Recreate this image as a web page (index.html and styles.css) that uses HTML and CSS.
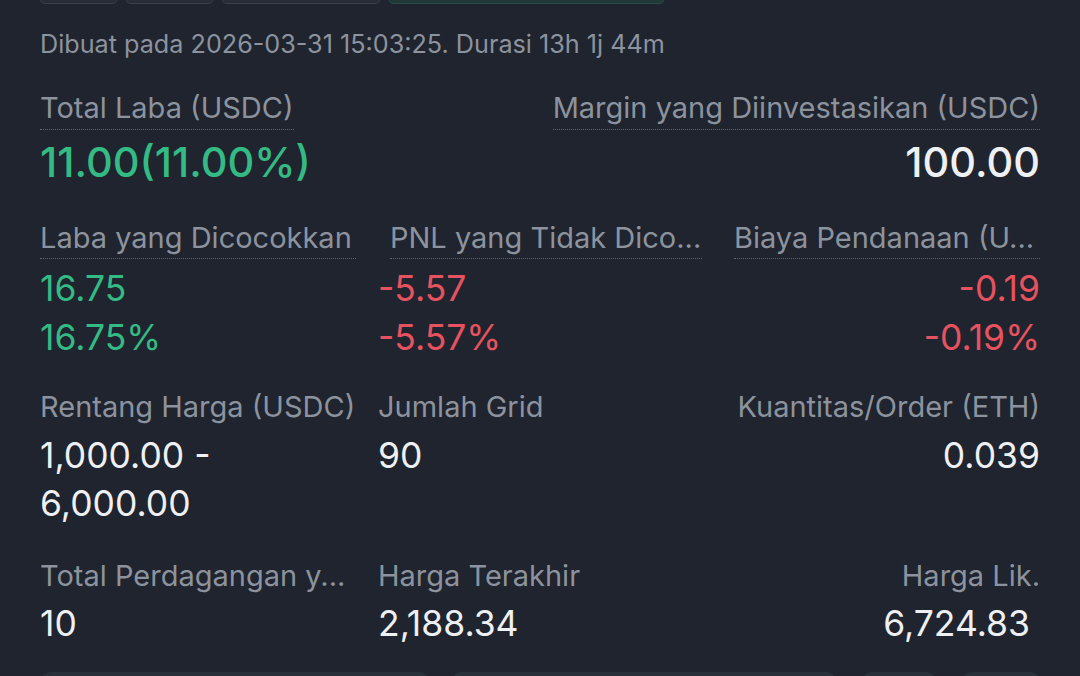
FILE: index.html
```html
<!DOCTYPE html>
<html lang="id">
<head>
<meta charset="utf-8">
<title>Grid Bot</title>
<link rel="stylesheet" href="styles.css">
</head>
<body>
<div class="page">
  <div class="chips">
    <div class="chip c1"></div>
    <div class="chip c2"></div>
    <div class="chip c3"></div>
    <div class="chip c4 green"></div>
  </div>

  <div class="date">Dibuat pada 2026-03-31 15:03:25. Durasi 13h 1j 44m</div>

  <div class="row row1">
    <div class="cell">
      <div class="label dotted">Total Laba (USDC)</div>
      <div class="big up">11.00(11.00%)</div>
    </div>
    <div class="cell right">
      <div class="label dotted">Margin yang Diinvestasikan (USDC)</div>
      <div class="big">100.00</div>
    </div>
  </div>

  <div class="row row2 grid3">
    <div class="cell">
      <div class="label dotted w1">Laba yang Dicocokkan</div>
      <div class="val up">16.75</div>
      <div class="val up">16.75%</div>
    </div>
    <div class="cell">
      <div class="label dotted w2 indent">PNL yang Tidak Dico...</div>
      <div class="val down">-5.57</div>
      <div class="val down">-5.57%</div>
    </div>
    <div class="cell right">
      <div class="label dotted w3">Biaya Pendanaan (U...</div>
      <div class="val down">-0.19</div>
      <div class="val down">-0.19%</div>
    </div>
  </div>

  <div class="row row3 grid3">
    <div class="cell">
      <div class="label">Rentang Harga (USDC)</div>
      <div class="val">1,000.00 -</div>
      <div class="val">6,000.00</div>
    </div>
    <div class="cell">
      <div class="label">Jumlah Grid</div>
      <div class="val">90</div>
    </div>
    <div class="cell right">
      <div class="label">Kuantitas/Order (ETH)</div>
      <div class="val">0.039</div>
    </div>
  </div>

  <div class="row row4 grid3">
    <div class="cell">
      <div class="label">Total Perdagangan y...</div>
      <div class="val">10</div>
    </div>
    <div class="cell">
      <div class="label">Harga Terakhir</div>
      <div class="val">2,188.34</div>
    </div>
    <div class="cell right">
      <div class="label">Harga Lik.</div>
      <div class="val liq">6,724.83</div>
    </div>
  </div>

  <div class="buttons">
    <div class="btn b1"></div>
    <div class="btn b2"></div>
    <div class="btn b3"></div>
    <div class="btn b4"></div>
  </div>
</div>
</body>
</html>
```
FILE: styles.css
```css
* { box-sizing: border-box; }
html, body {
  margin: 0;
  padding: 0;
  background: #1f242e;
  overflow: hidden;
}
body {
  font-family: "Inter", "Lato", sans-serif;
  color: #eef0f3;
}
.page {
  width: 1080px;
  height: 676px;
  padding: 0 40px;
  overflow: hidden;
}
.chips {
  display: flex;
  height: 40px;
  margin-top: -36px;
}
.chip {
  height: 40px;
  background: #272c36;
  border: 1px solid #3a404b;
  border-radius: 6px;
}
.c1 { width: 79px; margin-left: -1px; }
.c2 { width: 89px; margin-left: 7px; }
.c3 { width: 160px; margin-left: 7px; }
.c4 { width: 277px; margin-left: 7px; }
.chip.green { background: #1f3938; border-color: #2a4a47; }

.date {
  margin-top: 25px;
  font-size: 25.2px;
  line-height: 30px;
  color: #8c939e;
  white-space: nowrap;
}

.row { display: flex; justify-content: space-between; }
.grid3 {
  display: grid;
  grid-template-columns: 338px 1fr auto;
}
.cell { display: flex; flex-direction: column; align-items: flex-start; }
.cell.right { align-items: flex-end; text-align: right; }

.label {
  font-size: 29px;
  line-height: 30px;
  color: #8c939e;
  white-space: nowrap;
}
.dotted {
  border-bottom: 1.5px dotted #5f6671;
}
.row1 { margin-top: 34px; }
.row1 .label { padding-bottom: 6px; }
.big {
  margin-top: 8px;
  font-size: 41.5px;
  line-height: 48px;
  font-weight: 500;
}
.val {
  font-size: 35.5px;
  line-height: 48px;
  white-space: nowrap;
}
.up { color: #34ba84; }
.down { color: #e6525f; }

.row2 { margin-top: 37px; }
.row2 .label { padding-bottom: 5px; }
.row2 .val { line-height: 49px; }
.row2 .label + .val { margin-top: 5px; }
.w1 { width: 316px; }
.w2 { width: 312px; }
.w3 { width: 306px; text-align: left; }
.indent { margin-left: 12px; }

.row3 { margin-top: 30px; }
.row3 .label + .val { margin-top: 10px; }

.row4 { margin-top: 33px; }
.row4 .label + .val { margin-top: 9px; }
.liq { margin-right: 10px; }

.buttons {
  display: flex;
  margin-top: 24px;
  height: 40px;
}
.btn {
  height: 40px;
  background: #2a303a;
  border-radius: 10px;
}
.b1 { width: 388px; margin-left: 1px; }
.b2 { width: 384px; margin-left: 23px; }
.b3 { width: 74px; margin-left: 26px; }
.b4 { width: 78px; margin-left: 26px; }
```
